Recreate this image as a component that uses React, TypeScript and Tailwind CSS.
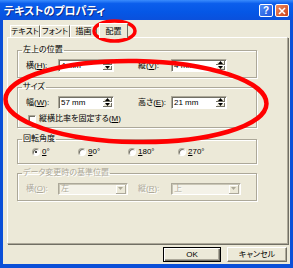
import type { ReactNode } from "react";

const ui =
  "font-['Liberation_Sans','Noto_Sans_CJK_JP',sans-serif] [font-feature-settings:'palt'] text-[8px] leading-[10px] text-black";

function Arrow({ up, color = "#000" }: { up?: boolean; color?: string }) {
  return (
    <svg width="5" height="3" viewBox="0 0 5 3">
      <path d={up ? "M2.5 0 L5 3 L0 3 Z" : "M0 0 L5 0 L2.5 3 Z"} fill={color} />
    </svg>
  );
}

function Spin({ value }: { value: string }) {
  return (
    <div className="flex h-[13px] w-[56px] border border-t-[#aca899] border-l-[#aca899] border-r-white border-b-white bg-white shadow-[inset_1px_1px_0_#716f64]">
      <span className="flex-1 pl-[2px] pt-[1px] font-['Liberation_Sans',sans-serif]">{value}</span>
      <div className="flex w-[10px] flex-col gap-[1px] py-[1px] pr-[1px]">
        <div className="flex flex-1 items-center justify-center border-r border-b border-[#716f64] bg-[#ece9d8] shadow-[inset_1px_1px_0_#fff]">
          <Arrow up />
        </div>
        <div className="flex flex-1 items-center justify-center border-r border-b border-[#716f64] bg-[#ece9d8] shadow-[inset_1px_1px_0_#fff]">
          <Arrow />
        </div>
      </div>
    </div>
  );
}

function Select({ value }: { value: string }) {
  return (
    <div className="flex h-[12px] w-[70px] items-center border border-t-[#aca899] border-l-[#aca899] border-r-white border-b-white bg-[#f4f2e8] shadow-[inset_1px_1px_0_#c9c6b6]">
      <span className="flex-1 pl-[2px] text-[#aca899] [text-shadow:1px_1px_0_#fff]">{value}</span>
      <div className="mr-[1px] flex h-[9px] w-[10px] items-center justify-center border-r border-b border-[#aca899] bg-[#ece9d8] shadow-[inset_1px_1px_0_#fff]">
        <Arrow color="#aca899" />
      </div>
    </div>
  );
}

function Group({
  title,
  disabled,
  className,
  children,
}: {
  title: string;
  disabled?: boolean;
  className: string;
  children: ReactNode;
}) {
  return (
    <fieldset
      className={`ml-[9px] w-[240px] border border-[#aca899] pl-[8px] shadow-[inset_1px_1px_0_#fff,1px_1px_0_#fff] ${className}`}
    >
      <legend
        className={`-ml-[4px] px-[1px] ${disabled ? "text-[#aca899] [text-shadow:1px_1px_0_#fff]" : ""}`}
      >
        {title}
      </legend>
      {children}
    </fieldset>
  );
}

function Key({ k }: { k: string }) {
  return (
    <>
      (<u>{k}</u>):
    </>
  );
}

function Radio({ checked, label }: { checked?: boolean; label: ReactNode }) {
  return (
    <div className="flex items-center gap-[2px]">
      <span className="flex h-[8px] w-[8px] items-center justify-center rounded-full border border-t-[#aca899] border-l-[#aca899] border-r-white border-b-white bg-white shadow-[inset_1px_1px_0_#716f64]">
        {checked && <span className="h-[2px] w-[2px] rounded-full bg-black" />}
      </span>
      <span className="font-['Liberation_Sans',sans-serif]">{label}</span>
    </div>
  );
}

function Tab({ label, w, active }: { label: string; w: string; active?: boolean }) {
  if (active) {
    return (
      <div
        className={`relative z-10 -mb-[1px] ml-[2px] flex h-[15px] ${w} items-start justify-center border-t border-l border-r border-t-white border-l-white border-r-[#716f64] bg-[#ece9d8] pt-[3px]`}
      >
        {label}
      </div>
    );
  }
  return (
    <div
      className={`flex h-[12px] ${w} items-center justify-center border-t border-l border-r border-t-white border-l-white border-r-[#716f64] bg-[#ece9d8]`}
    >
      {label}
    </div>
  );
}

export default function App() {
  return (
    <div className={`relative h-[268px] w-[293px] overflow-hidden bg-[#0a4fd8] ${ui}`}>
      <div className="flex h-full flex-col">
        {/* title bar */}
        <div className="flex h-[20px] items-center bg-[linear-gradient(180deg,#3a8cfd_0%,#0b5eec_18%,#0557e6_60%,#0a50dc_100%)] pl-[4px] pr-[4px]">
          <span className="flex-1 pt-[2px] text-[11px] leading-[14px] font-bold text-white [text-shadow:1px_1px_0_#0a2a8a]">
            テキストのプロパティ
          </span>
          <div className="flex gap-[2px] pt-[1px]">
            <div className="flex h-[13px] w-[14px] items-center justify-center rounded-[2px] border border-white bg-[linear-gradient(135deg,#4e8cf7,#1f55db)] text-[10px] font-bold text-white">
              ?
            </div>
            <div className="flex h-[13px] w-[14px] items-center justify-center rounded-[2px] border border-white bg-[linear-gradient(135deg,#ef8a5f,#c8421b)]">
              <svg width="8" height="8" viewBox="0 0 8 8">
                <path d="M1 1 L7 7 M7 1 L1 7" stroke="#fff" strokeWidth="1.6" />
              </svg>
            </div>
          </div>
        </div>

        {/* dialog body */}
        <div className="mb-[4px] ml-[3px] mr-[3px] flex flex-1 flex-col bg-[#ece9d8]">
          <div className="flex h-[17px] items-end pl-[7px]">
            <Tab label="テキスト" w="w-[30px]" />
            <Tab label="フォント" w="w-[30px]" />
            <Tab label="描画" w="w-[27px]" />
            <Tab label="配置" w="w-[29px]" active />
          </div>

          <div className="ml-[4px] mr-[2px] h-[207px] border border-t-white border-l-white border-r-[#aca899] border-b-[#aca899] pt-[7px] shadow-[1px_1px_0_#716f64]">
            <Group title="左上の位置" className="pt-[4px] pb-[5px]">
              <div className="flex items-center">
                <span className="w-[32px]">
                  横<Key k="H" />
                </span>
                <Spin value="4 mm" />
                <span className="ml-[24px] w-[33px]">
                  縦<Key k="V" />
                </span>
                <Spin value="4 mm" />
              </div>
            </Group>

            <Group title="サイズ" className="mt-[4px] pt-[4px] pb-[3px]">
              <div className="flex items-center">
                <span className="w-[32px]">
                  幅<Key k="W" />
                </span>
                <Spin value="57 mm" />
                <span className="ml-[24px] w-[33px]">
                  高さ<Key k="E" />
                </span>
                <Spin value="21 mm" />
              </div>
              <div className="ml-[2px] mt-[5px] flex h-[10px] items-center gap-[3px]">
                <span className="h-[8px] w-[8px] border border-t-[#aca899] border-l-[#aca899] border-r-white border-b-white bg-white shadow-[inset_1px_1px_0_#716f64]" />
                <span>
                  縦横比率を固定する(<u>M</u>)
                </span>
              </div>
            </Group>

            <Group title="回転角度" className="mt-[6px] pt-[3px] pb-[6px]">
              <div className="ml-[6px] grid h-[10px] grid-cols-[46px_50px_50px_50px] items-center">
                <Radio
                  checked
                  label={
                    <>
                      <u>0</u>°
                    </>
                  }
                />
                <Radio
                  label={
                    <>
                      <u>9</u>0°
                    </>
                  }
                />
                <Radio
                  label={
                    <>
                      <u>1</u>80°
                    </>
                  }
                />
                <Radio
                  label={
                    <>
                      <u>2</u>70°
                    </>
                  }
                />
              </div>
            </Group>

            <Group title="データ変更時の基準位置" disabled className="mt-[4px] pt-[5px] pb-[5px]">
              <div className="flex items-center text-[#aca899] [text-shadow:1px_1px_0_#fff]">
                <span className="w-[32px]">
                  横<Key k="O" />
                </span>
                <Select value="左" />
                <span className="ml-[10px] w-[33px]">
                  縦<Key k="R" />
                </span>
                <Select value="上" />
              </div>
            </Group>
          </div>

          <div className="mr-[3px] mt-[3px] flex justify-end gap-[6px]">
            <div className="flex h-[15px] w-[58px] items-center justify-center border border-black shadow-[inset_1px_1px_0_#fff,inset_-1px_-1px_0_#716f64,inset_-2px_-2px_0_#aca899] font-['Liberation_Sans',sans-serif]">
              OK
            </div>
            <div className="flex h-[15px] w-[60px] items-center justify-center border border-t-white border-l-white border-r-[#716f64] border-b-[#716f64] shadow-[inset_-1px_-1px_0_#aca899]">
              キャンセル
            </div>
          </div>
        </div>
      </div>

      {/* red annotation marks */}
      <svg
        className="pointer-events-none absolute left-0 top-0"
        width="293"
        height="268"
        viewBox="0 0 293 268"
      >
        <ellipse cx="114.5" cy="31" rx="20.5" ry="10" fill="none" stroke="#f00" strokeWidth="3.5" />
        <ellipse
          cx="136"
          cy="101.5"
          rx="130.5"
          ry="40.5"
          fill="none"
          stroke="#f00"
          strokeWidth="4.5"
          transform="rotate(1 136 101.5)"
        />
      </svg>
    </div>
  );
}
